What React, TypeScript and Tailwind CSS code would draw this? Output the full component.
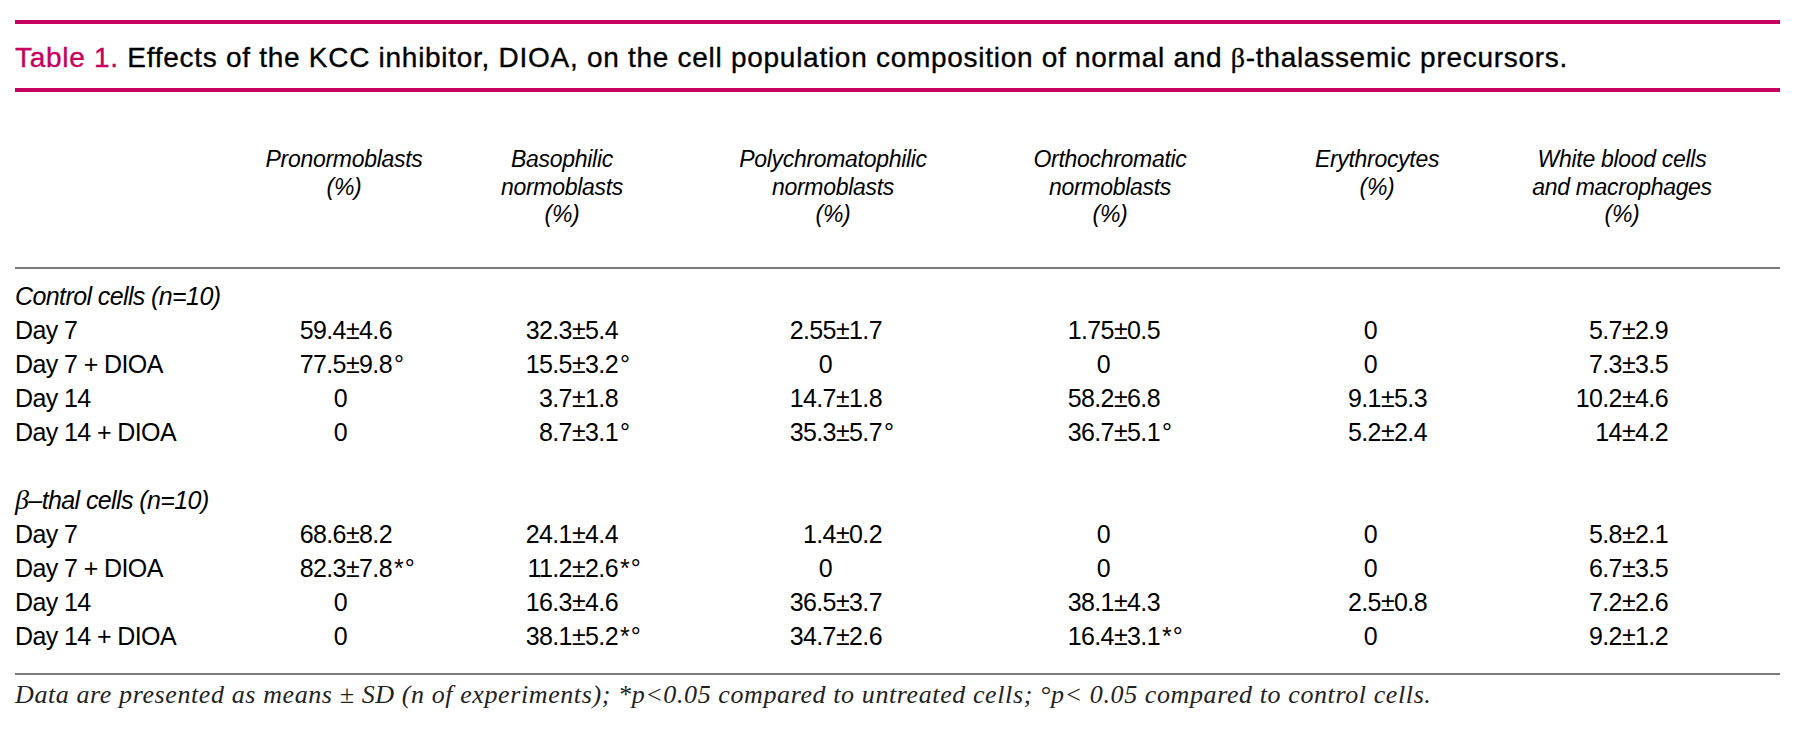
import React from "react";

type Val = { v: string; m?: string } | 0;

const controlRows: [string, Val[]][] = [
  ["Day 7", [{ v: "59.4±4.6" }, { v: "32.3±5.4" }, { v: "2.55±1.7" }, { v: "1.75±0.5" }, 0, { v: "5.7±2.9" }]],
  ["Day 7 + DIOA", [{ v: "77.5±9.8", m: "°" }, { v: "15.5±3.2", m: "°" }, 0, 0, 0, { v: "7.3±3.5" }]],
  ["Day 14", [0, { v: "3.7±1.8" }, { v: "14.7±1.8" }, { v: "58.2±6.8" }, { v: "9.1±5.3" }, { v: "10.2±4.6" }]],
  ["Day 14 + DIOA", [0, { v: "8.7±3.1", m: "°" }, { v: "35.3±5.7", m: "°" }, { v: "36.7±5.1", m: "°" }, { v: "5.2±2.4" }, { v: "14±4.2" }]],
];

const thalRows: [string, Val[]][] = [
  ["Day 7", [{ v: "68.6±8.2" }, { v: "24.1±4.4" }, { v: "1.4±0.2" }, 0, 0, { v: "5.8±2.1" }]],
  ["Day 7 + DIOA", [{ v: "82.3±7.8", m: "*°" }, { v: "11.2±2.6", m: "*°" }, 0, 0, 0, { v: "6.7±3.5" }]],
  ["Day 14", [0, { v: "16.3±4.6" }, { v: "36.5±3.7" }, { v: "38.1±4.3" }, { v: "2.5±0.8" }, { v: "7.2±2.6" }]],
  ["Day 14 + DIOA", [0, { v: "38.1±5.2", m: "*°" }, { v: "34.7±2.6" }, { v: "16.4±3.1", m: "*°" }, 0, { v: "9.2±1.2" }]],
];

// right padding per column, numbers vs the lone zeros
const numPad = ["pr-[56px]", "pr-[58px]", "pr-[108px]", "pr-[70px]", "pr-[97px]", "pr-[52px]"];
const zeroPad = ["pr-[101px]", "pr-[101px]", "pr-[158px]", "pr-[120px]", "pr-[147px]", "pr-[101px]"];

const headers = [
  ["Pronormoblasts", "(%)"],
  ["Basophilic", "normoblasts", "(%)"],
  ["Polychromatophilic", "normoblasts", "(%)"],
  ["Orthochromatic", "normoblasts", "(%)"],
  ["Erythrocytes", "(%)"],
  ["White blood cells", "and macrophages", "(%)"],
];

const grid = "grid grid-cols-[225px_208px_228px_314px_240px_294px_196px]";

const DataRow = ({ label, vals }: { label: string; vals: Val[] }) => (
  <div className={`${grid} h-[34px] leading-[34px]`}>
    <div className="whitespace-nowrap">{label}</div>
    {vals.map((c, i) =>
      c === 0 ? (
        <div key={i} className={`text-right ${zeroPad[i]}`}>0</div>
      ) : (
        <div key={i} className={`text-right whitespace-nowrap ${numPad[i]}`}>
          <span className="relative">
            {c.v}
            {c.m && <span className="absolute left-full top-[-3px] pl-[2px] tracking-[1px]">{c.m}</span>}
          </span>
        </div>
      )
    )}
  </div>
);

export default function App() {
  return (
    <div className="w-[1800px] h-[736px] bg-white overflow-hidden text-black font-['Liberation_Sans',Arial,sans-serif]">
      <div className="pl-[15px] pt-[20px] w-[1780px]">
        <div className="h-[4px] bg-[#c6005f]" />
        <h1 className="mt-[16px] text-[28px] leading-[36px] tracking-[0.72px] whitespace-nowrap font-normal [-webkit-text-stroke:0.35px]">
          <span className="text-[#c6005f]">Table 1.</span> Effects of the KCC inhibitor, DIOA, on the cell population
          composition of normal and <span className="font-['Liberation_Serif',serif]">β</span>-thalassemic precursors.
        </h1>
        <div className="mt-[12px] h-[4px] bg-[#c6005f]" />

        <div className={`${grid} mt-[54px] italic text-[23px] leading-[27.5px] tracking-[-0.3px]`}>
          <div />
          {headers.map((h, i) => (
            <div key={i} className="text-center whitespace-nowrap">
              {h.map((l, j) => (
                <div key={j}>{l}</div>
              ))}
            </div>
          ))}
        </div>

        <div className="mt-[38px] h-[2px] bg-[#7a7a7a]" />

        <div className="mt-[10px] text-[25px] tracking-[-0.6px]">
          <div className="h-[34px] leading-[34px] italic">Control cells (n=10)</div>
          {controlRows.map(([l, v]) => (
            <DataRow key={"c" + l} label={l} vals={v} />
          ))}
          <div className="h-[34px]" />
          <div className="h-[34px] leading-[34px] italic">
            <span className="font-['Liberation_Serif',serif] text-[28px]">β</span>–thal cells (n=10)
          </div>
          {thalRows.map(([l, v]) => (
            <DataRow key={"t" + l} label={l} vals={v} />
          ))}
        </div>

        <div className="mt-[20px] h-[2px] bg-[#7a7a7a]" />

        <p className="mt-[5px] italic text-[26px] leading-[30px] tracking-[0.6px] whitespace-nowrap font-['Liberation_Serif',serif] text-[#222]">
          Data are presented as means ± SD (n of experiments); *p&lt;0.05 compared to untreated cells; °p&lt; 0.05
          compared to control cells.
        </p>
      </div>
    </div>
  );
}
